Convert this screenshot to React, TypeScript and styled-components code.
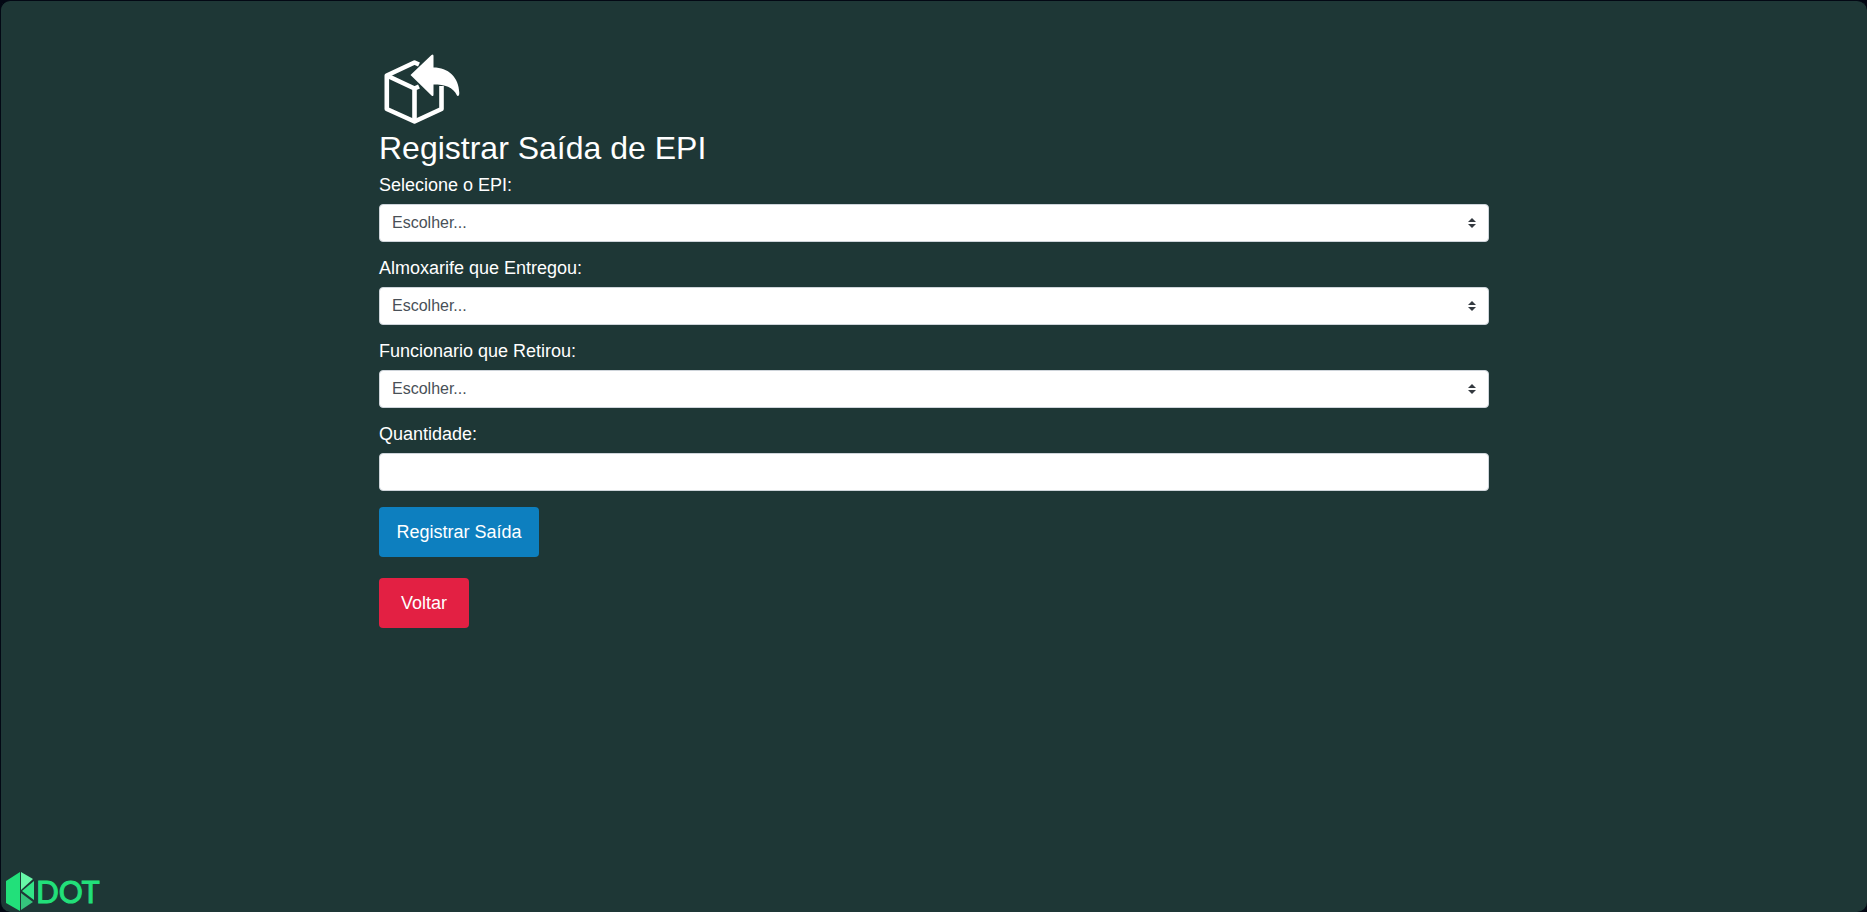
import React from "react";
import styled, { createGlobalStyle } from "styled-components";

const GlobalStyle = createGlobalStyle`
  *, *::before, *::after { box-sizing: border-box; }
  body {
    margin: 0;
    background: #030814;
    color: #fff;
    font-family: "Liberation Sans", Arial, sans-serif;
    font-size: 18px;
    line-height: 21px;
  }
`;

const Page = styled.div`
  display: flex;
  flex-direction: column;
  min-height: 100vh;
  border: 1px solid #030814;
  border-width: 1px 0 0 1px;
  border-radius: 10px;
  background: #1e3736;
`;

const Container = styled.main`
  flex: 1;
  width: 100%;
  max-width: 1140px;
  margin: 0 auto;
  padding: 48px 15px 24px;
`;

const BoxIcon = styled.svg`
  display: block;
  width: 84px;
  height: 80px;
`;

const Title = styled.h2`
  margin: 0 0 8px;
  font-size: 32px;
  font-weight: 400;
  line-height: 38px;
`;

const Field = styled.div`
  margin-bottom: 16px;
`;

const Label = styled.label`
  display: block;
  width: fit-content;
  margin-bottom: 8px;
`;

const SelectWrap = styled.div`
  position: relative;
`;

const Control = styled.input`
  display: block;
  width: 100%;
  height: 38px;
  margin: 0;
  padding: 6px 12px;
  border: 1px solid #ced4da;
  border-radius: 4px;
  background: #fff;
  color: #495057;
  font: 16px/24px "Liberation Sans", Arial, sans-serif;
  appearance: none;
`;

const Arrows = styled.svg`
  position: absolute;
  top: 14px;
  right: 13px;
  width: 8px;
  height: 10px;
  pointer-events: none;
`;

const Button = styled.button<{ $color: string; $width: number }>`
  display: block;
  width: ${(p) => p.$width}px;
  height: 50px;
  margin: 0 0 21px;
  padding: 0;
  border: 0;
  border-radius: 4px;
  background: ${(p) => p.$color};
  color: #fff;
  font: 18px/21px "Liberation Sans", Arial, sans-serif;
  cursor: pointer;
`;

const Footer = styled.footer`
  display: flex;
  align-items: flex-start;
  height: 40px;
  padding-left: 5px;
  color: #22e07a;
  font: 30px/38px Lato, sans-serif;
  -webkit-text-stroke: 1px #22e07a;
`;

const Gem = styled.svg`
  width: 28px;
  height: 39px;
  margin-right: 2px;
`;

function SelectField({ id, label }: { id: string; label: string }) {
  return (
    <Field>
      <Label htmlFor={id}>{label}</Label>
      <SelectWrap>
        <Control as="select" id={id} defaultValue="">
          <option value="">Escolher...</option>
        </Control>
        <Arrows viewBox="0 0 4 5" aria-hidden="true">
          <path fill="#343a40" d="M2 0 0 2h4zm0 5L0 3h4z" />
        </Arrows>
      </SelectWrap>
    </Field>
  );
}

export default function App() {
  return (
    <>
      <GlobalStyle />
      <Page>
        <Container>
          <BoxIcon viewBox="0 0 84 80" aria-hidden="true">
            <g fill="none" stroke="#fff" strokeWidth="4.6" strokeLinejoin="round">
              <path d="M40 15.500 35.500 13.500 7.800 26.500V60L35.500 72.500 62.500 60V37" />
              <path d="M7.800 26.500 35.500 39.500 40 37.500M35.500 39.500V72" />
            </g>
            <path
              fill="#fff"
              d="M31.500 26 52.500 6Q54.500 4.500 54.500 7V18.500C69 18.500 80 28 80.300 44Q80.300 48.500 78 46.500C74 38 66 35.500 54.500 35.500V45.500Q54.500 48 52.500 46.500Z"
            />
          </BoxIcon>
          <Title>Registrar Saída de EPI</Title>
          <form onSubmit={(e) => e.preventDefault()}>
            <SelectField id="epi" label="Selecione o EPI:" />
            <SelectField id="almoxarife" label="Almoxarife que Entregou:" />
            <SelectField id="funcionario" label="Funcionario que Retirou:" />
            <Field>
              <Label htmlFor="quantidade">Quantidade:</Label>
              <Control id="quantidade" type="text" inputMode="numeric" />
            </Field>
            <Button type="submit" $color="#0d7fbf" $width={160}>
              Registrar Saída
            </Button>
            <Button type="button" $color="#e32043" $width={90}>
              Voltar
            </Button>
          </form>
        </Container>
        <Footer>
          <Gem viewBox="0 0 28 39" aria-hidden="true">
            <path fill="#22e07a" d="M14 0v39L0 31V9z" />
            <path fill="#68f7a8" d="M15 0 27 7 15 18z" />
            <path fill="#32e487" d="M28 9v19L16 19z" />
            <path fill="#35c47c" d="M15 21 27 30 15 38z" />
          </Gem>
          DOT
        </Footer>
      </Page>
    </>
  );
}
